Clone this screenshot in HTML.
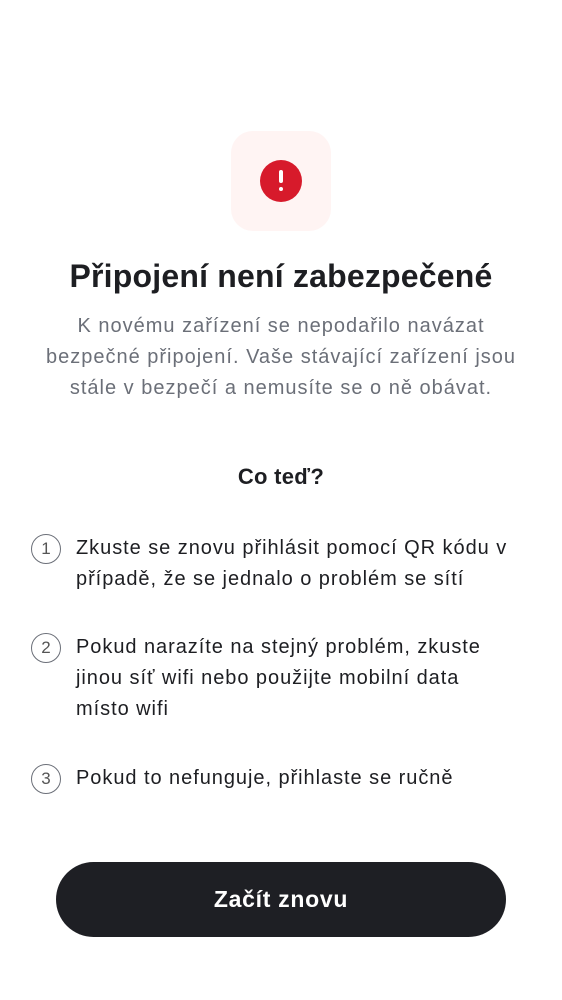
<!DOCTYPE html><html><head><meta charset="utf-8"><style>
body{margin:0;width:562px;height:1000px;background:#fff;font-family:"Liberation Sans",sans-serif;position:relative;overflow:hidden;color:#1d1e22}
.box{position:absolute;left:231px;top:131px;width:100px;height:100px;border-radius:22px;background:#fff4f3}
.dot{position:absolute;left:260px;top:160px;width:42px;height:42px;border-radius:50%;background:#d71a2b}
.dot i{position:absolute;left:19px;top:10px;width:4px;height:13px;background:#fff;border-radius:2px}
.dot b{position:absolute;left:19px;top:27px;width:4px;height:4px;background:#fff;border-radius:50%}
h1{position:absolute;top:258px;left:0;width:562px;text-align:center;font-size:32px;font-weight:bold;margin:0;letter-spacing:0.2px;white-space:nowrap}
.sub{position:absolute;top:311px;left:0;width:562px;text-align:center;font-size:20px;line-height:31px;color:#6b6f78;white-space:nowrap;letter-spacing:1px}
h2{position:absolute;top:464px;left:0;width:562px;text-align:center;font-size:22px;margin:0;font-weight:bold;letter-spacing:0.3px}
.it{position:absolute;left:76px;width:480px;font-size:20px;line-height:31px;white-space:nowrap;letter-spacing:0.95px}
.n{position:absolute;left:31px;width:28px;height:28px;border:1.5px solid #6b6f78;border-radius:50%;text-align:center;line-height:28px;font-size:17px;color:#555}
.btn{position:absolute;left:56px;top:862px;width:450px;height:75px;border-radius:38px;background:#1e1f24;color:#fff;text-align:center;line-height:75px;font-size:23px;font-weight:bold;letter-spacing:0.7px}
</style></head><body>
<div class="box"></div><div class="dot"><i></i><b></b></div>
<h1>Připojení není zabezpečené</h1>
<div class="sub">K novému zařízení se nepodařilo navázat<br>bezpečné připojení. Vaše stávající zařízení jsou<br>stále v bezpečí a nemusíte se o ně obávat.</div>
<h2>Co teď?</h2>
<div class="n" style="top:534px">1</div><div class="it" style="top:533px">Zkuste se znovu přihlásit pomocí QR kódu v<br>případě, že se jednalo o problém se sítí</div>
<div class="n" style="top:633px">2</div><div class="it" style="top:632px">Pokud narazíte na stejný problém, zkuste<br>jinou síť wifi nebo použijte mobilní data<br>místo wifi</div>
<div class="n" style="top:764px">3</div><div class="it" style="top:763px">Pokud to nefunguje, přihlaste se ručně</div>
<div class="btn">Začít znovu</div>
</body></html>
